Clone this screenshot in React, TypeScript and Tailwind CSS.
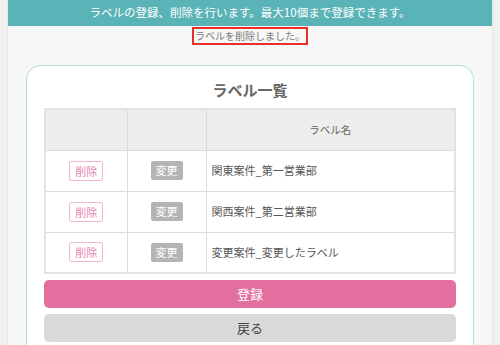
export default function App() {
  const rows = [
    "関東案件_第一営業部",
    "関西案件_第二営業部",
    "変更案件_変更したラベル",
  ];

  return (
    <div
      className="w-[500px] h-[345px] overflow-hidden bg-[#f1f1f1]"
      style={{ fontFamily: '"Noto Sans CJK JP", "Noto Sans", sans-serif' }}
    >
      <div className="mx-[7px] h-full border-x border-[#e4e4e4] bg-[#f7f7f7]">
        {/* ヘッダー */}
        <div className="h-[26px] bg-[#5ab3b7] flex items-center justify-center text-white text-[11.5px]">
          ラベルの登録、削除を行います。最大10個まで登録できます。
        </div>

        {/* メッセージ */}
        <div className="flex justify-center mt-[1px]">
          <p className="border-2 border-[#e8302a] px-[1px] h-[18px] leading-[14px] text-[10px] text-[#7a7a7a]">
            ラベルを削除しました。
          </p>
        </div>

        {/* カード */}
        <div className="mt-[20px] mx-[18px] rounded-t-[15px] border border-b-0 border-[#b3dfe1] bg-white px-[17px] pt-[14px] pb-[4px]">
          <h2 className="text-center text-[15px] font-bold text-[#666] leading-[20px] mb-[8px]">
            ラベル一覧
          </h2>

          <table className="w-full border-collapse border-2 border-[#e2e2e2] text-[11px] text-[#555]">
            <thead>
              <tr className="h-[41px] bg-[#eeeeee]">
                <th className="w-[82px] border border-[#dcdcdc]"></th>
                <th className="w-[79px] border border-[#dcdcdc]"></th>
                <th className="border border-[#dcdcdc] font-normal text-[10.5px] text-[#666]">
                  ラベル名
                </th>
              </tr>
            </thead>
            <tbody>
              {rows.map((name) => (
                <tr key={name} className="h-[41px]">
                  <td className="border border-[#dcdcdc] text-center">
                    <span className="inline-block border border-[#f3b7cf] rounded-[2px] px-[5px] h-[20px] leading-[18px] text-[11px] text-[#e884ad]">
                      削除
                    </span>
                  </td>
                  <td className="border border-[#dcdcdc] text-center">
                    <span className="inline-block bg-[#b4b4b4] rounded-[2px] px-[5px] h-[19px] leading-[19px] text-[11px] text-white">
                      変更
                    </span>
                  </td>
                  <td className="border border-[#dcdcdc] pl-[5px]">
                    {name}
                  </td>
                </tr>
              ))}
            </tbody>
          </table>

          <button className="mt-[6px] w-full h-[28px] rounded-[5px] bg-[#e36f9e] text-white text-[13px]">
            登録
          </button>
          <button className="mt-[6px] w-full h-[28px] rounded-[5px] bg-[#d9d9d9] text-[#444] text-[13px]">
            戻る
          </button>
        </div>
      </div>
    </div>
  );
}
